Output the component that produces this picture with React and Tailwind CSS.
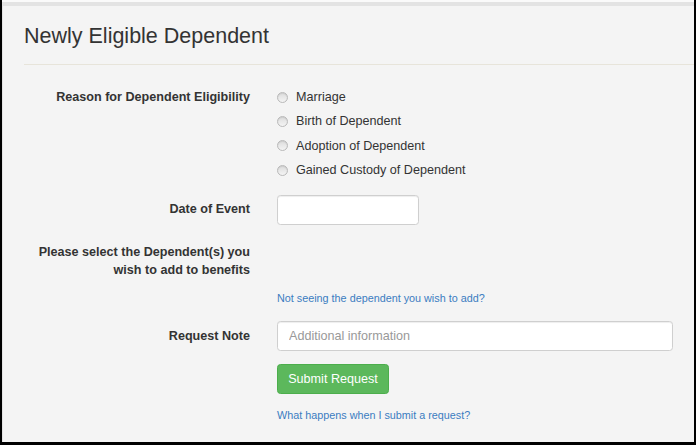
import React from "react";

const reasons = [
  "Marriage",
  "Birth of Dependent",
  "Adoption of Dependent",
  "Gained Custody of Dependent",
];

function Radio({ label }) {
  return (
    <label className="flex h-[24.33px] items-center gap-[8px]">
      <span className="h-[11px] w-[11px] rounded-full border border-[#b9b9b9] bg-gradient-to-b from-[#dcdcdc] to-[#f4f4f4] shadow-[inset_0_1px_1px_rgba(0,0,0,0.08)]" />
      <span className="leading-[24px]">{label}</span>
    </label>
  );
}

function Row({ label, children, className = "", labelClass = "" }) {
  return (
    <div className={`flex ${className}`}>
      <div className={`w-[247px] shrink-0 text-right font-bold leading-[18px] ${labelClass}`}>
        {label}
      </div>
      <div className="ml-[27px] flex-1">{children}</div>
    </div>
  );
}

export default function App() {
  return (
    <div
      className="h-[445px] w-[696px] bg-black pl-[2px] pr-[2px] pb-[3px] text-[12.6px] text-[#333]"
      style={{ fontFamily: '"Liberation Sans", Arial, sans-serif' }}
    >
      <div className="h-full bg-[#fafafa] pt-[2px]">
        <div className="h-full border-t-[4px] border-l border-[#e3e3e3] bg-[#f4f4f4] pr-[21px]">
          {/* heading */}
          <div className="ml-[21px] mr-[-21px] border-b border-[#e7e4da] pt-[17px] pb-[15px]">
            <h3 className="text-[21.5px] leading-[26px] font-normal text-[#333]">
              Newly Eligible Dependent
            </h3>
          </div>

          {/* reason */}
          <Row label="Reason for Dependent Eligibility" className="mt-[20px]" labelClass="pt-[3px]">
            <div className="flex flex-col">
              {reasons.map((r) => (
                <Radio key={r} label={r} />
              ))}
            </div>
          </Row>

          {/* date */}
          <Row label="Date of Event" className="mt-[12.7px] items-center" labelClass="pb-[3px]">
            <input
              type="text"
              className="block h-[30px] w-[142px] rounded-[3.5px] border border-[#cfcfcf] bg-white shadow-[inset_0_1px_1px_rgba(0,0,0,0.07)] outline-none"
            />
          </Row>

          {/* dependents */}
          <Row
            label={
              <>
                Please select the Dependent(s) you
                <br />
                wish to add to benefits
              </>
            }
            className="mt-[18px]"
          />
          <Row label="" className="mt-[11px]">
            <a className="block text-[10.8px] leading-[16px] text-[#3b7cc1]">
              Not seeing the dependent you wish to add?
            </a>
          </Row>

          {/* note */}
          <Row label="Request Note" className="mt-[15px] items-center" labelClass="pb-[1px]">
            <input
              type="text"
              placeholder="Additional information"
              className="block h-[30px] w-full rounded-[3.5px] border border-[#cfcfcf] bg-white px-[11px] text-[12.6px] shadow-[inset_0_1px_1px_rgba(0,0,0,0.07)] outline-none placeholder:text-[#999]"
            />
          </Row>

          <Row label="" className="mt-[13px]">
            <button className="h-[30px] w-[112px] rounded-[3.5px] border border-[#4cae4c] bg-[#5cb85c] text-[12.6px] text-white">
              Submit Request
            </button>
          </Row>

          <Row label="" className="mt-[13px]">
            <a className="block text-[10.8px] leading-[16px] text-[#3b7cc1]">
              What happens when I submit a request?
            </a>
          </Row>
        </div>
      </div>
    </div>
  );
}
